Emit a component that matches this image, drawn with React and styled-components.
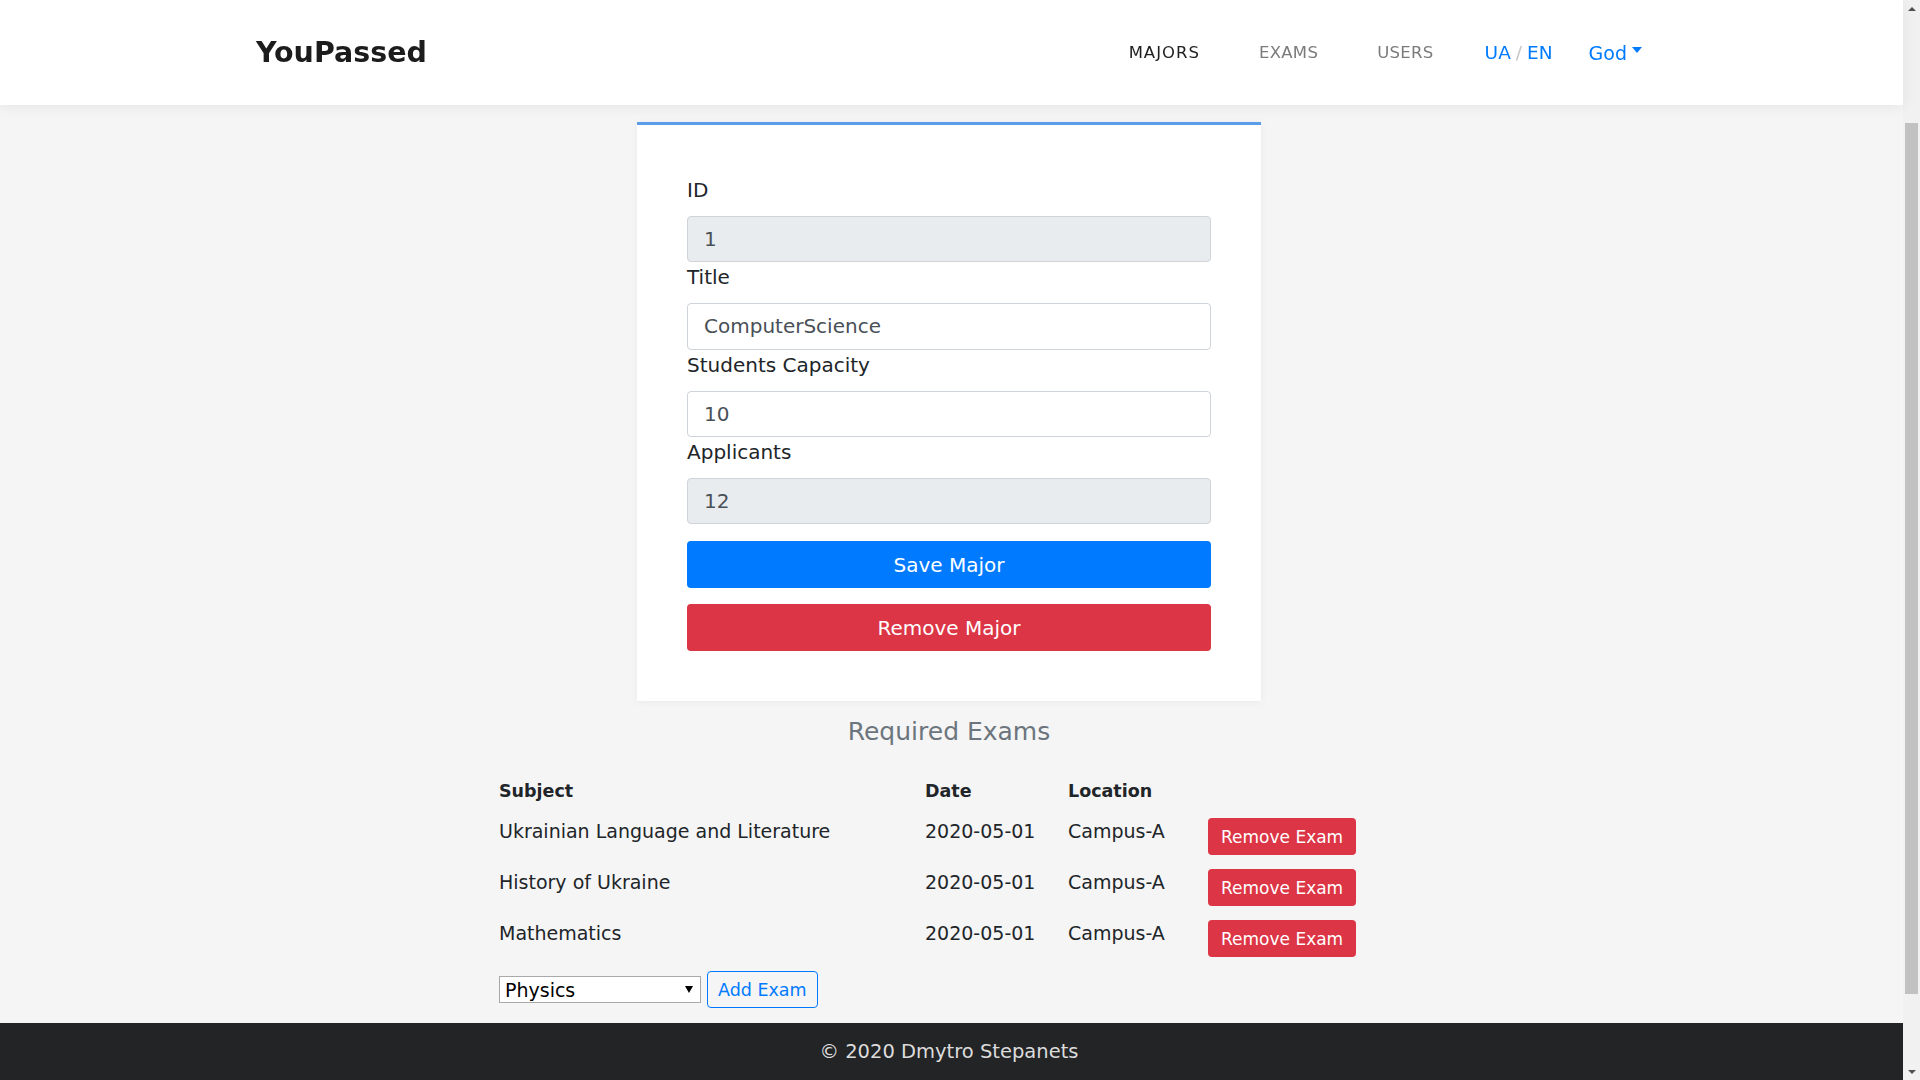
import React from 'react';
import styled, { createGlobalStyle } from 'styled-components';

const GlobalStyle = createGlobalStyle`
  * { box-sizing: border-box; }
  html, body { margin: 0; padding: 0; }
  body {
    background: #f5f5f5;
    font-family: "DejaVu Sans", "Liberation Sans", sans-serif;
    color: #212529;
  }
`;

// page leaves room for the classic 17px scrollbar the browser draws in the reference
const Page = styled.div`
  margin-right: 17px;
`;

const ScrollRail = styled.aside`
  position: fixed;
  top: 0;
  right: 0;
  bottom: 0;
  width: 17px;
  background: #f1f1f1;
  display: flex;
  flex-direction: column;
  align-items: center;
`;

const RailArrow = styled.div`
  height: 17px;
  width: 17px;
  display: flex;
  align-items: center;
  justify-content: center;
  &::before {
    content: '';
    border-left: 4px solid transparent;
    border-right: 4px solid transparent;
    ${p => (p.$down ? 'border-top: 4px solid #505050;' : 'border-bottom: 4px solid #505050;')}
  }
`;

const RailTrack = styled.div`
  flex: 1;
  width: 100%;
  padding: 0 2px;
`;

const RailThumb = styled.div`
  margin-top: 106px;
  height: 871px;
  background: #c1c1c1;
`;

const Navbar = styled.header`
  position: relative;
  z-index: 2;
  height: 105px;
  background: #fff;
  box-shadow: 0 2px 14px rgba(0, 0, 0, 0.07);
`;

const NavInner = styled.nav`
  max-width: 1391px;
  height: 100%;
  margin: 0 auto;
  display: flex;
  align-items: center;
  justify-content: space-between;
`;

const Brand = styled.a`
  font-size: 28.5px;
  font-weight: 700;
  color: #1c1c1c;
  text-decoration: none;
`;

const NavList = styled.div`
  display: flex;
  align-items: center;
  padding-right: 5px;
`;

const NavLink = styled.a`
  font-size: 16.5px;
  letter-spacing: ${p => (p.$active ? '1px' : '0.3px')};
  color: ${p => (p.$active ? '#1f1f1f' : '#7b7b7b')};
  text-decoration: none;
  margin-right: 59px;
`;

const Lang = styled.div`
  font-size: 18.5px;
  color: #007bff;
  margin-right: 36px;
  margin-left: -8px;
`;

const Slash = styled.span`
  color: #c6c6c6;
  margin: 0 5px;
`;

const UserToggle = styled.button`
  display: flex;
  align-items: center;
  background: none;
  border: none;
  padding: 0;
  font-family: inherit;
  font-size: 19px;
  color: #007bff;
  cursor: pointer;
  &::after {
    content: '';
    margin-left: 5px;
    margin-top: -6px;
    border-top: 6px solid #007bff;
    border-left: 5px solid transparent;
    border-right: 5px solid transparent;
  }
`;

const Main = styled.main`
  padding: 17px 5px 0 0;
`;

const Card = styled.section`
  width: 624px;
  margin: 0 auto;
  background: #fff;
  border-top: 3px solid #5c9dea;
  padding: 50px;
  box-shadow: 0 1px 8px rgba(0, 0, 0, 0.05);
`;

const Label = styled.label`
  display: block;
  font-size: 20px;
  line-height: 30px;
  margin-bottom: 11px;
  color: #212529;
`;

const Input = styled.input`
  display: block;
  width: 100%;
  height: 46.33px;
  padding: 0 16px;
  font-family: inherit;
  font-size: 20px;
  color: #495057;
  background: ${p => (p.disabled ? '#e9ecef' : '#fff')};
  border: 1px solid #ced4da;
  border-radius: 4px;
  outline: none;
`;

const BlockButton = styled.button`
  display: block;
  width: 100%;
  height: 47px;
  margin-top: ${p => (p.$danger ? '16px' : '17px')};
  border: none;
  border-radius: 4px;
  font-family: inherit;
  font-size: 20px;
  color: #fff;
  background: ${p => (p.$danger ? '#dc3545' : '#007bff')};
  cursor: pointer;
`;

const ExamsSection = styled.section`
  width: 900px;
  margin: 0 auto;
`;

const Heading = styled.h3`
  margin: 16px 0 0;
  font-size: 25px;
  line-height: 30px;
  font-weight: 400;
  color: #6c757d;
  text-align: center;
`;

const Table = styled.table`
  width: 100%;
  border-collapse: collapse;
  table-layout: fixed;
`;

const Th = styled.th`
  width: ${p => p.$w || 'auto'};
  text-align: left;
  font-size: 17.5px;
  font-weight: 700;
  line-height: 26px;
  padding: 31px 0 7px;
  color: #212529;
`;

const Td = styled.td`
  vertical-align: top;
  padding: 7px 0;
  font-size: 19px;
  line-height: 26px;
  color: #212529;
`;

const SmallButton = styled.button`
  height: 37px;
  padding: 0 ${p => (p.$outline ? '10px' : '13px')};
  border-radius: 4px;
  font-family: inherit;
  font-size: ${p => (p.$outline ? '17.5px' : '17px')};
  color: ${p => (p.$outline ? '#007bff' : '#fff')};
  background: ${p => (p.$outline ? 'transparent' : '#dc3545')};
  border: ${p => (p.$outline ? '1px solid #007bff' : 'none')};
  cursor: pointer;
`;

const AddRow = styled.div`
  display: flex;
  align-items: center;
  gap: 6px;
  margin: 7px 0 15px;
`;

const SelectWrap = styled.div`
  position: relative;
  width: 202px;
  height: 27px;
`;

const Select = styled.select`
  appearance: none;
  width: 100%;
  height: 100%;
  padding: 0 20px 0 5px;
  font-family: inherit;
  font-size: 19px;
  color: #000;
  background: #fff;
  border: 1px solid #a9a9a9;
  border-radius: 0;
  outline: none;
`;

const Arrow = styled.span`
  position: absolute;
  right: 8px;
  top: 10px;
  border-top: 7px solid #000;
  border-left: 4px solid transparent;
  border-right: 4px solid transparent;
  pointer-events: none;
`;

const Footer = styled.footer`
  height: 144px;
  padding: 16px 5px 0 0;
  background: #232426;
  color: #dcdcdc;
  text-align: center;
  font-size: 19.5px;
  line-height: 26px;
`;

const exams = [
  { subject: 'Ukrainian Language and Literature', date: '2020-05-01', location: 'Campus-A' },
  { subject: 'History of Ukraine', date: '2020-05-01', location: 'Campus-A' },
  { subject: 'Mathematics', date: '2020-05-01', location: 'Campus-A' },
];

const fields = [
  { label: 'ID', value: '1', disabled: true },
  { label: 'Title', value: 'ComputerScience' },
  { label: 'Students Capacity', value: '10' },
  { label: 'Applicants', value: '12', disabled: true },
];

export default function App() {
  return (
    <>
      <GlobalStyle />
      <Page>
        <Navbar>
          <NavInner>
            <Brand href="#">YouPassed</Brand>
            <NavList>
              <NavLink href="#" $active>MAJORS</NavLink>
              <NavLink href="#">EXAMS</NavLink>
              <NavLink href="#">USERS</NavLink>
              <Lang>UA<Slash>/</Slash>EN</Lang>
              <UserToggle>God</UserToggle>
            </NavList>
          </NavInner>
        </Navbar>

        <Main>
          <Card>
            {fields.map(f => (
              <div key={f.label}>
                <Label>{f.label}</Label>
                <Input defaultValue={f.value} disabled={f.disabled} />
              </div>
            ))}
            <BlockButton>Save Major</BlockButton>
            <BlockButton $danger>Remove Major</BlockButton>
          </Card>

          <ExamsSection>
            <Heading>Required Exams</Heading>
            <Table>
              <thead>
                <tr>
                  <Th $w="426px">Subject</Th>
                  <Th $w="143px">Date</Th>
                  <Th $w="140px">Location</Th>
                  <Th />
                </tr>
              </thead>
              <tbody>
                {exams.map(e => (
                  <tr key={e.subject}>
                    <Td>{e.subject}</Td>
                    <Td>{e.date}</Td>
                    <Td>{e.location}</Td>
                    <Td><SmallButton>Remove Exam</SmallButton></Td>
                  </tr>
                ))}
              </tbody>
            </Table>
            <AddRow>
              <SelectWrap>
                <Select defaultValue="Physics">
                  <option>Physics</option>
                  <option>Chemistry</option>
                  <option>Biology</option>
                </Select>
                <Arrow />
              </SelectWrap>
              <SmallButton $outline>Add Exam</SmallButton>
            </AddRow>
          </ExamsSection>
        </Main>

        <Footer>© 2020 Dmytro Stepanets</Footer>
      </Page>

      <ScrollRail>
        <RailArrow />
        <RailTrack><RailThumb /></RailTrack>
        <RailArrow $down />
      </ScrollRail>
    </>
  );
}
